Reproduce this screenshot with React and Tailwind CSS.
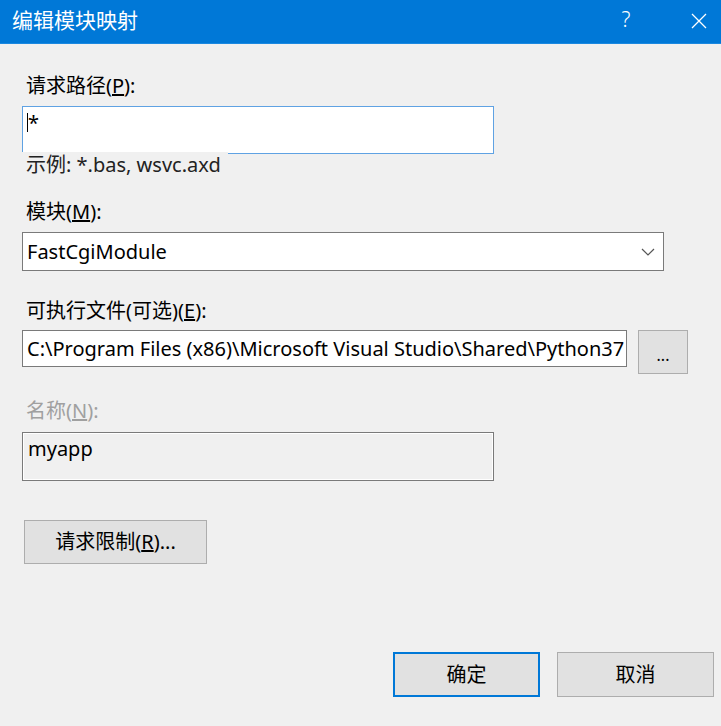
import React from 'react';

// Small label with an underlined access key, e.g. 请求路径(P):
const Label = ({ text, keyChar, after = '):', className = '' }) => (
    <div className={`text-[20px] leading-[24px] ${className}`}>
        {text}(<u>{keyChar}</u>{after}
    </div>
);

const App = () => {
    return (
        <div
            className="w-[721px] h-[726px] bg-[#f0f0f0] text-black flex flex-col overflow-hidden"
            style={{ fontFamily: '"Noto Sans", "Noto Sans CJK SC", sans-serif' }}
        >
            {/* title bar */}
            <div className="h-[44px] shrink-0 bg-[#0078d7] border-b border-[#1a88e0] flex items-center text-white">
                <div className="pl-[12px] text-[21px] leading-none flex-1 mb-[2px]">编辑模块映射</div>
                <div className="w-[30px] text-center text-[21px] font-light leading-none mr-[50px] mb-[4px]">?</div>
                <svg width="16" height="16" viewBox="0 0 16 16" className="mr-[14px] mb-[2px]">
                    <path d="M1 1 L15 15 M15 1 L1 15" stroke="white" strokeWidth="1.3" fill="none" />
                </svg>
            </div>

            <div className="flex flex-col pl-[22px]">
                <Label text="请求路径" keyChar="P" className="mt-[30px] pl-[4px]" />
                <div className="mt-[8px] w-[472px] h-[48px] bg-white border border-[#5fa2e3] flex items-start pl-[4px] pt-[5px]">
                    <span className="w-px h-[19px] bg-black mt-px"></span>
                    <span className="text-[20px] leading-[22px]">*</span>
                </div>
                {/* hint sits over the bottom border of the field, as in the dialog */}
                <div className="relative -mt-[2px] w-[206px] h-[26px] bg-[#f0f0f0] pl-[4px] text-[20px] leading-[26px] text-[#222] whitespace-nowrap">
                    示例: *.bas, wsvc.axd
                </div>

                <Label text="模块" keyChar="M" className="mt-[22px] pl-[4px]" />
                <div className="mt-[8px] w-[642px] h-[39px] bg-white border border-[#7a7a7a] flex items-center pl-[4px] pr-[8px]">
                    <span className="flex-1 text-[20px]">FastCgiModule</span>
                    <svg width="14" height="8" viewBox="0 0 14 8">
                        <path d="M1 1 L7 7 L13 1" stroke="#555" strokeWidth="1.2" fill="none" />
                    </svg>
                </div>

                <Label text="可执行文件(可选)" keyChar="E" className="mt-[28px] pl-[4px]" />
                <div className="mt-[7px] flex items-start gap-[11px]">
                    <div className="w-[605px] h-[37px] bg-white border border-[#7a7a7a] flex items-center pl-[4px] overflow-hidden">
                        <span className="block w-[598px] overflow-hidden whitespace-nowrap text-[20px]">
                            C:\Program Files (x86)\Microsoft Visual Studio\Shared\Python37
                        </span>
                    </div>
                    <button className="w-[50px] h-[44px] bg-[#e1e1e1] border border-[#adadad] text-[16px] leading-none pt-[6px]">
                        ...
                    </button>
                </div>

                <Label text="名称" keyChar="N" className="mt-[25px] pl-[4px] text-[#a0a0a0]" />
                <div className="mt-[9px] w-[472px] h-[49px] bg-[#f0f0f0] border border-[#7a7a7a] shadow-[inset_1px_1px_0_#fff,inset_-1px_-1px_0_#fff] pl-[5px] pt-[4px] text-[20px] leading-[24px]">
                    myapp
                </div>

                <button className="mt-[39px] ml-[2px] w-[183px] h-[44px] bg-[#e1e1e1] border border-[#adadad] text-[20px]">
                    请求限制(<u>R</u>)...
                </button>
            </div>

            <div className="mt-[88px] flex justify-end gap-[17px] pr-[7px]">
                <button className="w-[147px] h-[45px] bg-[#e1e1e1] border-2 border-[#0078d7] text-[20px]">确定</button>
                <button className="w-[157px] h-[45px] bg-[#e1e1e1] border border-[#adadad] text-[20px]">取消</button>
            </div>
        </div>
    );
};

export default App;
